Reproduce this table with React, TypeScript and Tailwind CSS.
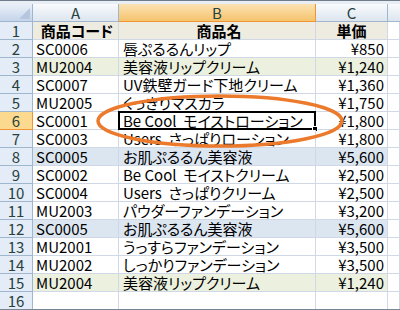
import React from "react";

type Row = {
  code: string;
  name: string;
  price: string;
  tone?: "tan" | "green" | "blue";
  bold?: boolean;
};

const rows: Row[] = [
  { code: "商品コード", name: "商品名", price: "単価", tone: "tan", bold: true },
  { code: "SC0006", name: "唇ぷるるんリップ", price: "¥850" },
  { code: "MU2004", name: "美容液リップクリーム", price: "¥1,240", tone: "green" },
  { code: "SC0007", name: "UV鉄壁ガード下地クリーム", price: "¥1,360" },
  { code: "MU2005", name: "くっきりマスカラ", price: "¥1,750" },
  { code: "SC0001", name: "Be Cool  モイストローション", price: "¥1,800" },
  { code: "SC0003", name: "Users  さっぱりローション", price: "¥1,800" },
  { code: "SC0005", name: "お肌ぷるるん美容液", price: "¥5,600", tone: "blue" },
  { code: "SC0002", name: "Be Cool  モイストクリーム", price: "¥2,500" },
  { code: "SC0004", name: "Users  さっぱりクリーム", price: "¥2,500" },
  { code: "MU2003", name: "パウダーファンデーション", price: "¥3,200" },
  { code: "SC0005", name: "お肌ぷるるん美容液", price: "¥5,600", tone: "blue" },
  { code: "MU2001", name: "うっすらファンデーション", price: "¥3,500" },
  { code: "MU2002", name: "しっかりファンデーション", price: "¥3,500" },
  { code: "MU2004", name: "美容液リップクリーム", price: "¥1,240", tone: "green" },
  { code: "", name: "", price: "" },
];

const toneBg = {
  tan: "bg-[#eeece1]",
  green: "bg-[#ebf1de]",
  blue: "bg-[#dce6f1]",
  none: "bg-white",
};

const cols = "grid grid-cols-[33px_86px_197px_72px_12px]";
const cell = "h-[18px] border-r border-b border-[#d0d7e5] leading-[17px] whitespace-pre";

export default function App() {
  return (
    <div
      className="relative w-[400px] h-[310px] overflow-hidden bg-white text-[15px] text-black border-b border-[#7a8696] [font-feature-settings:'palt']"
      style={{ fontFamily: '"Noto Sans CJK JP", "Liberation Sans", sans-serif' }}
    >
      <div className="h-[4px] border-t border-[#6f7d8c] bg-[#e9eef5]" />

      {/* 列見出し */}
      <div className={cols}>
        <div className="h-[18px] border-r border-b border-[#9eb6ce] bg-gradient-to-b from-[#e9eff8] to-[#c6d5ea] flex items-end justify-end p-[2px]">
          <div className="w-0 h-0 border-l-[11px] border-l-transparent border-b-[11px] border-b-[#b4c7de]" />
        </div>
        <div className="h-[18px] border-r border-b border-[#9eb6ce] bg-gradient-to-b from-[#f9fbfd] to-[#dde5ef] text-center leading-[17px] text-[#27413e]">A</div>
        <div className="h-[18px] border-r border-b border-[#f29536] bg-gradient-to-b from-[#fbe3b3] to-[#f5c36b] text-center leading-[17px] text-[#27413e]">B</div>
        <div className="h-[18px] border-r border-b border-[#9eb6ce] bg-gradient-to-b from-[#f9fbfd] to-[#dde5ef] text-center leading-[17px] text-[#27413e]">C</div>
        <div className="h-[18px] border-b border-[#9eb6ce] bg-gradient-to-b from-[#f9fbfd] to-[#dde5ef]" />
      </div>

      {rows.map((r, i) => {
        const bg = toneBg[r.tone ?? "none"];
        const n = i + 1;
        const sel = n === 6;
        return (
          <div key={i} className={cols}>
            <div
              className={
                sel
                  ? "h-[18px] border-r border-b border-[#f29536] bg-[#fbd98f] text-center leading-[17px] text-[#27413e]"
                  : "h-[18px] border-r border-b border-[#9eb6ce] bg-[#e4ecf7] text-center leading-[17px] text-[#27413e]"
              }
            >
              {n}
            </div>
            <div className={`${cell} ${bg} pl-[3px] ${r.bold ? "font-bold text-center pl-0" : ""}`}>{r.code}</div>
            <div className={`${cell} ${bg} pl-[4px] relative ${r.bold ? "font-bold text-center pl-0" : ""}`}>
              {r.name}
              {sel && (
                <div className="absolute -left-[1px] -top-[1px] w-[198px] h-[19px] border-2 border-black">
                  <div className="absolute -right-[4px] -bottom-[4px] w-[6px] h-[6px] bg-black border border-white" />
                </div>
              )}
            </div>
            <div className={`${cell} ${bg} ${r.bold ? "font-bold text-center" : "text-right pr-[3px]"}`}>{r.price}</div>
            <div className={`${cell} bg-white`} />
          </div>
        );
      })}

      <svg className="absolute left-0 top-0 pointer-events-none" width="400" height="310">
        <ellipse cx="220" cy="121" rx="122" ry="25" fill="none" stroke="#ec7a2c" strokeWidth="3.5" />
      </svg>
    </div>
  );
}
